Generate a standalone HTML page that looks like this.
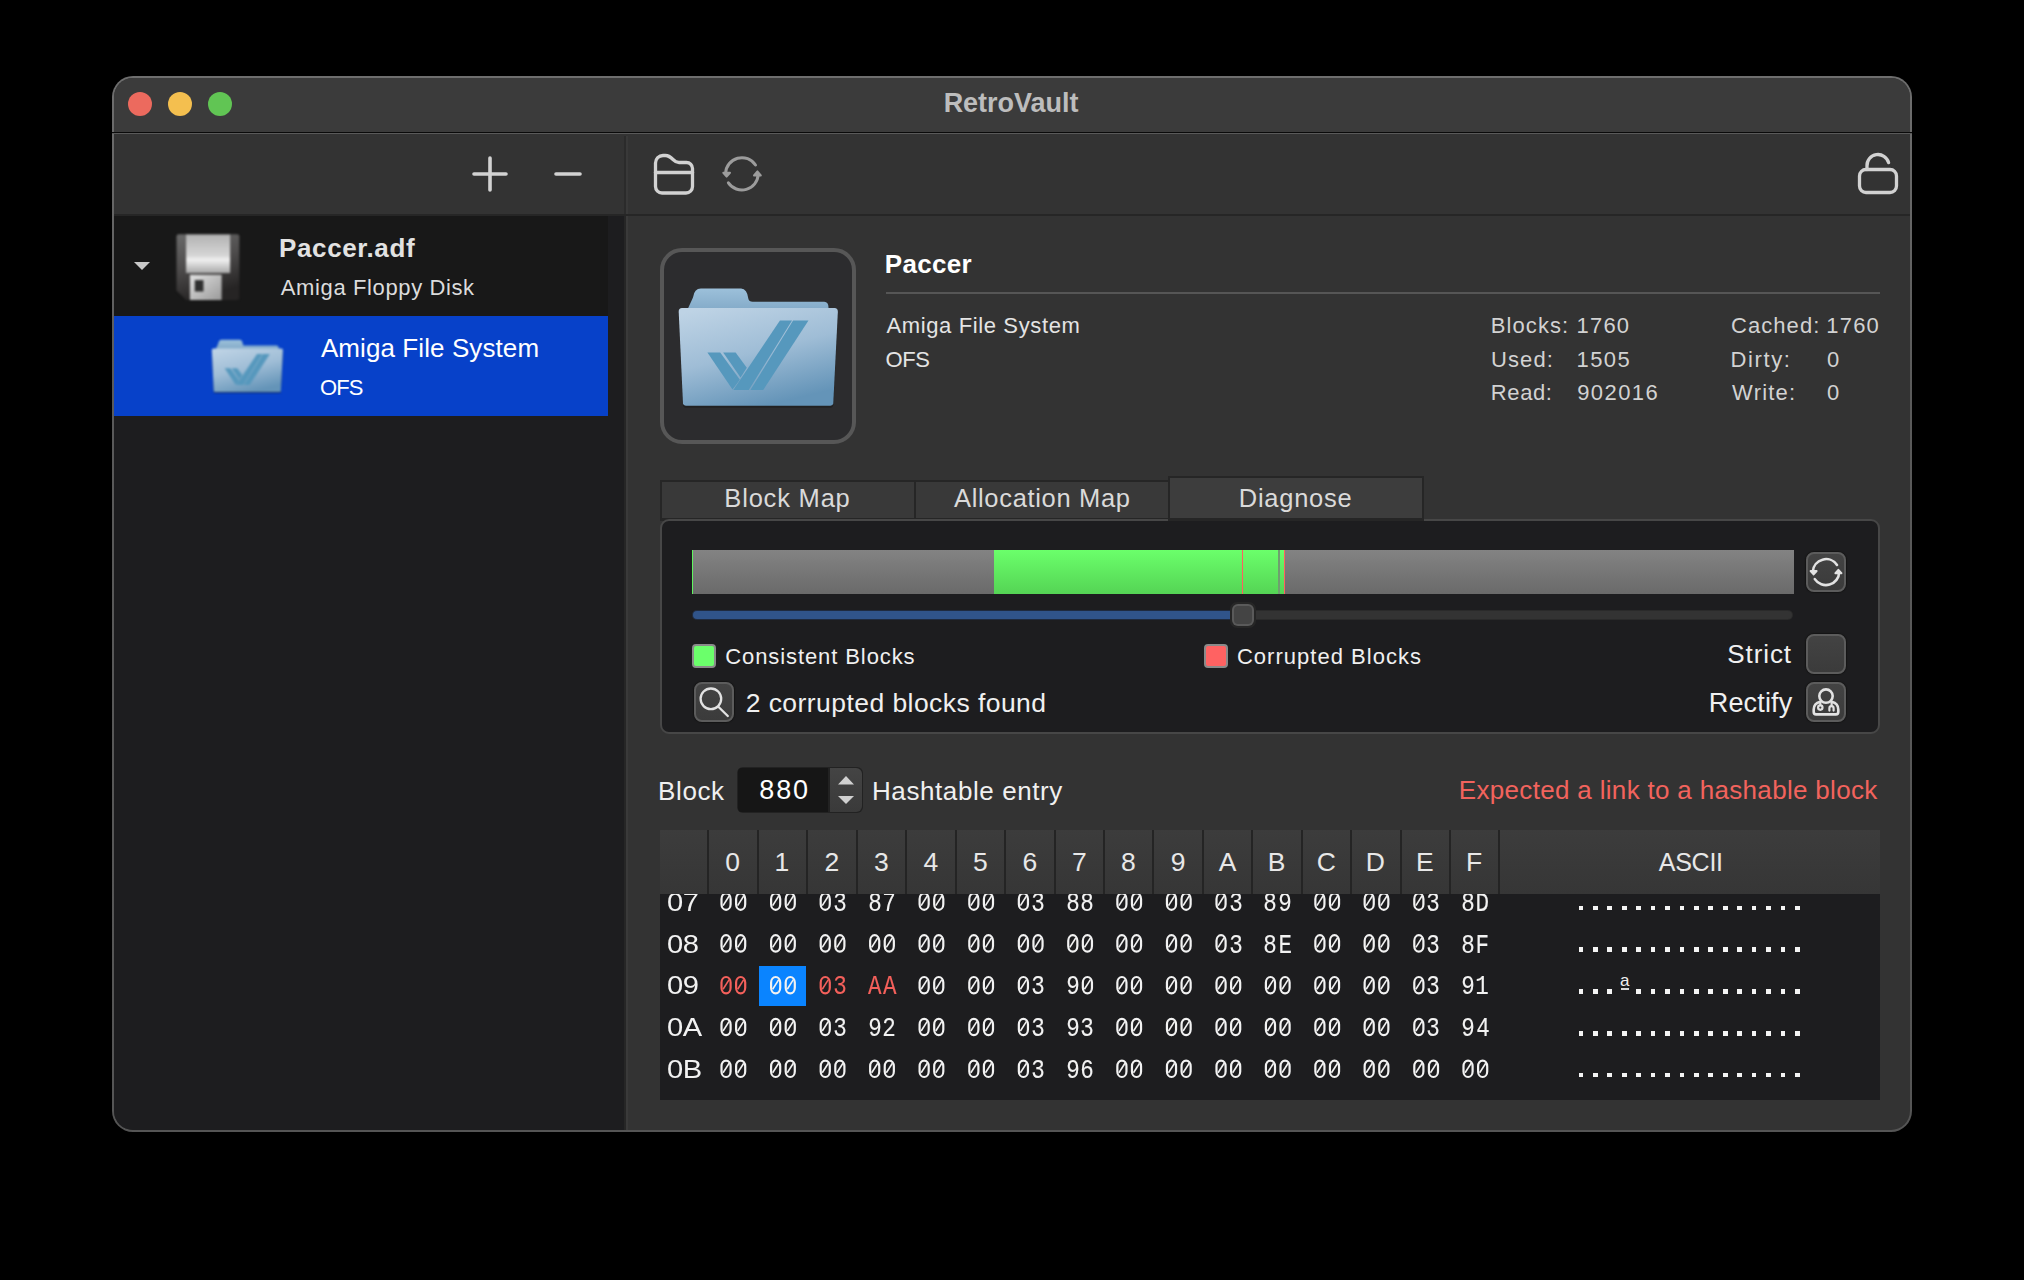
<!DOCTYPE html><html><head><meta charset="utf-8"><style>
html,body{margin:0;padding:0;background:#000;width:2024px;height:1280px;overflow:hidden}
.a{position:absolute;display:block}
.t{position:absolute;white-space:pre}
</style></head><body>
<div class="a" style="left:112px;top:76px;width:1800px;height:1056px;border-radius:21px;background:linear-gradient(#6e6e6e,#5a5a5a 30%,#555555);"></div>
<div class="a" style="left:114px;top:78px;width:1796px;height:1052px;border-radius:19px;background:#333333;overflow:hidden;" id="w">
<div class="a" style="left:-114px;top:-78px;width:2024px;height:1280px;">
<div class="a" style="left:0px;top:0px;width:2024px;height:132px;background:#3b3b3b"></div>
<div class="a" style="left:0px;top:132px;width:2024px;height:1px;background:#0a0a0a"></div>
<div class="a" style="left:0px;top:133px;width:2024px;height:1px;background:#5a5a5a"></div>
<div class="a" style="left:0px;top:134px;width:2024px;height:80px;background:#333333"></div>
<div class="a" style="left:0px;top:214px;width:2024px;height:2px;background:#262626"></div>
<div class="a" style="left:624px;top:136px;width:2px;height:78px;background:#2b2b2b"></div>
<div class="a" style="left:626px;top:136px;width:2px;height:78px;background:#393939"></div>
<div class="a" style="left:0px;top:216px;width:624px;height:1064px;background:#1d1d1f"></div>
<div class="a" style="left:624px;top:216px;width:2px;height:1064px;background:#262626"></div>
<div class="a" style="left:626px;top:216px;width:2px;height:1064px;background:#3a3a3a"></div>
<div class="a" style="left:0px;top:216px;width:608px;height:100px;background:#181818"></div>
<div class="a" style="left:0px;top:316px;width:608px;height:100px;background:#0741c9"></div>
</div></div>
<div class="a" style="left:112px;top:132px;width:1800px;height:1px;background:#0a0a0a"></div>
<div class="a" style="left:112px;top:133px;width:1800px;height:1px;background:#5a5a5a"></div>
<div class="a" style="left:128px;top:92px;width:24px;height:24px;border-radius:50%;background:#ec6a5e"></div>
<div class="a" style="left:168px;top:92px;width:24px;height:24px;border-radius:50%;background:#f4bf4f"></div>
<div class="a" style="left:208px;top:92px;width:24px;height:24px;border-radius:50%;background:#61c554"></div>
<div class="t" style="left:943.64px;top:90.00px;font:bold 27px/27px 'Liberation Sans';color:#bdbdbd;letter-spacing:-0.019px;">RetroVault</div>
<svg class="a" style="left:0px;top:0px;" width="2024" height="220" viewBox="0 0 2024 220">
<g fill="none" stroke="#d2d2d2" stroke-width="3.3" stroke-linecap="round" stroke-linejoin="round">
<path d="M474 174H506M490 158V190" stroke-width="3.6"/>
<path d="M556 174H580" stroke-width="3.6"/>
<path d="M655.5 186.5V163A7.5 7.5 0 0 1 663 155.5H665.5C669 155.5 671 157.5 673 159.5C675 161.5 676 162.5 679 162.5H686.5A6 6 0 0 1 692.5 168.5V186.5A6.5 6.5 0 0 1 686 193H662A6.5 6.5 0 0 1 655.5 186.5Z"/>
<path d="M655.5 172.5H692.5"/>
<rect x="1859.5" y="169.5" width="37" height="23" rx="6.5"/>
<path d="M1867 169.5V166A11 11 0 0 1 1888.6 162.6"/>
</g>
<g fill="none" stroke="#9c9c9c" stroke-width="3" stroke-linecap="round" stroke-linejoin="round">
<path d="M755.5 165A16.3 16.3 0 0 0 725.6 173.2"/>
<path d="M728.4 182.8A16.3 16.3 0 0 0 758.2 174.4"/>
<path d="M723.3 172.8H730L726.6 176.6Z" fill="#9c9c9c" stroke-width="2"/>
<path d="M754 175.4H760.8L757.4 171.4Z" fill="#9c9c9c" stroke-width="2"/>
</g>
</svg>
<svg class="a" style="left:130px;top:258px;" width="24" height="16" viewBox="0 0 24 16"><path d="M4 4H20L12 12Z" fill="#c8c8c8"/></svg>
<svg class="a" style="left:110px;top:210px;filter:blur(1.0px)" width="220" height="110" viewBox="0 0 2024 1012">
<defs>
<linearGradient id="fb" x1="0" y1="0" x2="0.3" y2="1"><stop offset="0" stop-color="#6a6a6a"/><stop offset="0.5" stop-color="#4e4c4c"/><stop offset="1" stop-color="#262424"/></linearGradient>
<linearGradient id="fl" x1="0" y1="0" x2="0" y2="1"><stop offset="0" stop-color="#b2b2b2"/><stop offset="0.55" stop-color="#d6d6d6"/><stop offset="0.65" stop-color="#f0f0f0"/><stop offset="0.8" stop-color="#d2d2d2"/><stop offset="1" stop-color="#a8a8a8"/></linearGradient>
<linearGradient id="fs" x1="0" y1="0" x2="1" y2="1"><stop offset="0" stop-color="#e0e0e0"/><stop offset="1" stop-color="#9a9a9a"/></linearGradient>
</defs>
<path d="M632 222H1170Q1190 222 1190 242V808Q1190 828 1170 828H700L612 740V242Q612 222 632 222Z" fill="url(#fb)"/>
<rect x="700" y="226" width="405" height="354" fill="url(#fl)"/>
<rect x="735" y="596" width="292" height="232" fill="url(#fs)"/>
<rect x="780" y="645" width="80" height="105" fill="#2e2e2e"/>
</svg>
<div class="t" style="left:279.11px;top:235.00px;font:bold 26px/26px 'Liberation Sans';color:#e2e2e2;letter-spacing:0.596px;">Paccer.adf</div>
<div class="t" style="left:280.80px;top:277.00px;font:normal 22px/22px 'Liberation Sans';color:#dcdcdc;letter-spacing:0.621px;">Amiga Floppy Disk</div>
<div class="t" style="left:320.90px;top:335.00px;font:normal 26px/26px 'Liberation Sans';color:#ffffff;letter-spacing:0.091px;">Amiga File System</div>
<div class="t" style="left:319.91px;top:377.00px;font:normal 22px/22px 'Liberation Sans';color:#ffffff;letter-spacing:-0.815px;">OFS</div>
<div class="a" style="left:660px;top:248px;width:196px;height:196px;border:4px solid #575757;border-radius:22px;background:#2c2c2e;box-sizing:border-box"></div>
<svg class="a" style="left:650px;top:240px;" width="220" height="210" viewBox="0 0 1341 1280">
<defs>
<linearGradient id="ffa" x1="0.15" y1="0" x2="0.55" y2="1"><stop offset="0" stop-color="#bed3e5"/><stop offset="0.5" stop-color="#9fbdd6"/><stop offset="1" stop-color="#6494b8"/></linearGradient>
<linearGradient id="fta" x1="0" y1="0" x2="0" y2="1"><stop offset="0" stop-color="#9cc0da"/><stop offset="1" stop-color="#83aac8"/></linearGradient>
</defs>
<path d="M230 420L262 350Q270 296 310 296H555Q592 296 600 360Q604 376 625 376H1062Q1088 378 1088 410V430H230Z" fill="url(#fta)"/>
<path d="M195 420H1125Q1146 420 1145 445L1117 995Q1116 1012 1100 1012H218Q202 1012 201 995L175 445Q174 420 195 420Z" fill="#1b1b1b" transform="translate(0,10)" opacity="0.6"/>
<path d="M195 415H1125Q1146 415 1145 440L1117 995Q1116 1010 1100 1010H218Q202 1010 201 995L175 440Q174 415 195 415Z" fill="url(#ffa)"/>
<g fill="#5698bd">
<path d="M792 490H866L602 915H508Z"/>
<path d="M872 490H966L690 915H612Z"/>
<path d="M350 685H428L548 852L503 912Z"/>
<path d="M446 685H522L590 778L552 838Z"/>
</g>
</svg>
<svg class="a" style="left:199.4px;top:318.4px;filter:blur(0.95px)" width="98.3" height="93.9" viewBox="0 0 1341 1280">
<defs>
<linearGradient id="ffb" x1="0.15" y1="0" x2="0.55" y2="1"><stop offset="0" stop-color="#bed3e5"/><stop offset="0.5" stop-color="#9fbdd6"/><stop offset="1" stop-color="#6494b8"/></linearGradient>
<linearGradient id="ftb" x1="0" y1="0" x2="0" y2="1"><stop offset="0" stop-color="#9cc0da"/><stop offset="1" stop-color="#83aac8"/></linearGradient>
</defs>
<path d="M230 420L262 350Q270 296 310 296H555Q592 296 600 360Q604 376 625 376H1062Q1088 378 1088 410V430H230Z" fill="url(#ftb)"/>
<path d="M195 420H1125Q1146 420 1145 445L1117 995Q1116 1012 1100 1012H218Q202 1012 201 995L175 445Q174 420 195 420Z" fill="#1b1b1b" transform="translate(0,10)" opacity="0.6"/>
<path d="M195 415H1125Q1146 415 1145 440L1117 995Q1116 1010 1100 1010H218Q202 1010 201 995L175 440Q174 415 195 415Z" fill="url(#ffb)"/>
<g fill="#5698bd">
<path d="M792 490H866L602 915H508Z"/>
<path d="M872 490H966L690 915H612Z"/>
<path d="M350 685H428L548 852L503 912Z"/>
<path d="M446 685H522L590 778L552 838Z"/>
</g>
</svg>
<div class="t" style="left:884.81px;top:251.00px;font:bold 26px/26px 'Liberation Sans';color:#ffffff;letter-spacing:0.280px;">Paccer</div>
<div class="a" style="left:886px;top:292px;width:994px;height:2px;background:#565656"></div>
<div class="t" style="left:886.50px;top:315.00px;font:normal 22px/22px 'Liberation Sans';color:#e4e4e4;letter-spacing:0.622px;">Amiga File System</div>
<div class="t" style="left:885.51px;top:349.00px;font:normal 22px/22px 'Liberation Sans';color:#e4e4e4;letter-spacing:-0.365px;">OFS</div>
<div class="t" style="left:1490.84px;top:315.00px;font:normal 22px/22px 'Liberation Sans';color:#d2d2d2;letter-spacing:1.067px;">Blocks:</div>
<div class="t" style="left:1490.95px;top:349.00px;font:normal 22px/22px 'Liberation Sans';color:#d2d2d2;letter-spacing:1.127px;">Used:</div>
<div class="t" style="left:1490.84px;top:382.00px;font:normal 22px/22px 'Liberation Sans';color:#d2d2d2;letter-spacing:0.602px;">Read:</div>
<div class="t" style="left:1576.55px;top:315.00px;font:normal 22px/22px 'Liberation Sans';color:#d2d2d2;letter-spacing:1.190px;">1760</div>
<div class="t" style="left:1576.55px;top:349.00px;font:normal 22px/22px 'Liberation Sans';color:#d2d2d2;letter-spacing:1.427px;">1505</div>
<div class="t" style="left:1577.21px;top:382.00px;font:normal 22px/22px 'Liberation Sans';color:#d2d2d2;letter-spacing:1.420px;">902016</div>
<div class="t" style="left:1731.10px;top:315.00px;font:normal 22px/22px 'Liberation Sans';color:#d2d2d2;letter-spacing:1.040px;">Cached:</div>
<div class="t" style="left:1730.44px;top:349.00px;font:normal 22px/22px 'Liberation Sans';color:#d2d2d2;letter-spacing:1.636px;">Dirty:</div>
<div class="t" style="left:1732.09px;top:382.00px;font:normal 22px/22px 'Liberation Sans';color:#d2d2d2;letter-spacing:1.182px;">Write:</div>
<div class="t" style="left:1826.35px;top:315.00px;font:normal 22px/22px 'Liberation Sans';color:#d2d2d2;letter-spacing:1.157px;">1760</div>
<div class="t" style="left:1827.12px;top:349.00px;font:normal 22px/22px 'Liberation Sans';color:#d2d2d2;letter-spacing:0.000px;">0</div>
<div class="t" style="left:1827.12px;top:382.00px;font:normal 22px/22px 'Liberation Sans';color:#d2d2d2;letter-spacing:0.000px;">0</div>
<div class="a" style="left:660px;top:480px;width:256px;height:41px;background:#262626"></div>
<div class="a" style="left:662px;top:482px;width:252px;height:36px;background:#393939"></div>
<div class="a" style="left:914px;top:480px;width:256px;height:41px;background:#262626"></div>
<div class="a" style="left:916px;top:482px;width:252px;height:36px;background:#393939"></div>
<div class="a" style="left:660px;top:519px;width:1220px;height:215px;border:2px solid #474747;border-radius:9px;background:#1d1d1f;box-sizing:border-box"></div>
<div class="a" style="left:1168px;top:476px;width:256px;height:45px;background:#262626"></div>
<div class="a" style="left:1170px;top:478px;width:252px;height:40px;background:#3d3d3d"></div>
<div class="t" style="left:724.36px;top:486.00px;font:normal 25.5px/25.5px 'Liberation Sans';color:#dadada;letter-spacing:0.800px;">Block Map</div>
<div class="t" style="left:954.00px;top:486.00px;font:normal 25.5px/25.5px 'Liberation Sans';color:#dadada;letter-spacing:0.672px;">Allocation Map</div>
<div class="t" style="left:1238.76px;top:486.00px;font:normal 25.5px/25.5px 'Liberation Sans';color:#dadada;letter-spacing:0.736px;">Diagnose</div>
<div class="a" style="left:692px;top:550px;width:1102px;height:44px;background:linear-gradient(#838383,#6a6a6a)"></div>
<div class="a" style="left:692px;top:550px;width:1px;height:44px;background:#5ff55f"></div>
<div class="a" style="left:994px;top:550px;width:291px;height:44px;background:linear-gradient(#6bff6b,#55d455)"></div>
<div class="a" style="left:1242px;top:550px;width:1px;height:44px;background:#ff5f5f"></div>
<div class="a" style="left:1278px;top:550px;width:2px;height:44px;background:#6f9f6f"></div>
<div class="a" style="left:1284px;top:550px;width:1px;height:44px;background:#ff6060"></div>
<div class="a" style="left:692px;top:610px;width:1101px;height:10px;background:#2a2a2a;border-radius:5px"></div>
<div class="a" style="left:693px;top:611px;width:1099px;height:8px;background:#333333;border-radius:4px"></div>
<div class="a" style="left:692px;top:610px;width:548px;height:10px;background:#1f2b40;border-radius:5px 0 0 5px"></div>
<div class="a" style="left:693px;top:611px;width:547px;height:8px;background:#30548a;border-radius:4px 0 0 4px"></div>
<div class="a" style="left:1230px;top:602px;width:26px;height:26px;background:#262626;border-radius:7px"></div>
<div class="a" style="left:1232px;top:604px;width:22px;height:22px;background:#5a5a5a;border-radius:6px"></div>
<div class="a" style="left:1234px;top:606px;width:18px;height:18px;background:#444444;border-radius:4px"></div>
<div class="a" style="left:692px;top:644px;width:24px;height:24px;background:#6bff6b;border:2px solid #8a8a8a;border-radius:4px;box-sizing:border-box"></div>
<div class="t" style="left:725.30px;top:646.00px;font:normal 22px/22px 'Liberation Sans';color:#f0f0f0;letter-spacing:0.904px;">Consistent Blocks</div>
<div class="a" style="left:1204px;top:644px;width:24px;height:24px;background:#ff6262;border:2px solid #8a8a8a;border-radius:4px;box-sizing:border-box"></div>
<div class="t" style="left:1236.90px;top:646.00px;font:normal 22px/22px 'Liberation Sans';color:#f0f0f0;letter-spacing:1.029px;">Corrupted Blocks</div>
<div class="t" style="left:1727.33px;top:641.00px;font:normal 26px/26px 'Liberation Sans';color:#f0f0f0;letter-spacing:0.890px;">Strict</div>
<div class="t" style="left:1708.74px;top:690.00px;font:normal 27px/27px 'Liberation Sans';color:#f0f0f0;letter-spacing:0.162px;">Rectify</div>
<div class="t" style="left:745.67px;top:690.00px;font:normal 26.5px/26.5px 'Liberation Sans';color:#f0f0f0;letter-spacing:0.442px;">2 corrupted blocks found</div>
<div class="a" style="left:1806px;top:552px;width:40px;height:40px;background:linear-gradient(#434343,#3b3b3b);border:2px solid #5c5c5c;border-radius:8px;box-sizing:border-box;box-shadow:0 0 1px 1px #151515"></div>
<div class="a" style="left:1806px;top:634px;width:40px;height:40px;background:linear-gradient(#434343,#3b3b3b);border:2px solid #5c5c5c;border-radius:8px;box-sizing:border-box;box-shadow:0 0 1px 1px #151515"></div>
<div class="a" style="left:1806px;top:682px;width:40px;height:40px;background:linear-gradient(#434343,#3b3b3b);border:2px solid #5c5c5c;border-radius:8px;box-sizing:border-box;box-shadow:0 0 1px 1px #151515"></div>
<div class="a" style="left:694px;top:682px;width:40px;height:40px;background:linear-gradient(#434343,#3b3b3b);border:2px solid #5c5c5c;border-radius:8px;box-sizing:border-box;box-shadow:0 0 1px 1px #151515"></div>
<svg class="a" style="left:0px;top:540px;" width="2024" height="200" viewBox="0 540 2024 200">
<g fill="none" stroke="#e2e2e2" stroke-width="2.6" stroke-linecap="round">
<circle cx="710.9" cy="698.8" r="10.3" stroke-width="2.3"/>
<path d="M718.6 707L727.8 716" stroke-width="2.3"/>
<path d="M1837 564.9A13.3 13.3 0 0 0 1812.8 571.5"/>
<path d="M1814.8 579.1A13.3 13.3 0 0 0 1839.2 572"/>
<circle cx="1826" cy="696.1" r="6.7"/>
<path d="M1820.2 701.8C1816.3 702.8 1813.7 705.8 1813.7 709.6V712A2.4 2.4 0 0 0 1816.1 714.4H1835.9A2.4 2.4 0 0 0 1838.3 712V709.6C1838.3 705.8 1835.7 702.8 1831.8 701.8"/>
<path d="M1820.3 702.5V705" stroke-width="2.2"/>
<circle cx="1820.3" cy="707.6" r="2.2" stroke-width="2.2"/>
<path d="M1831.6 702.5V706" stroke-width="2.2"/>
<path d="M1829.4 710.6V708.2A2.1 2.1 0 0 1 1833.6 708.2V710.6" stroke-width="2.2"/>
</g>
<g fill="#e2e2e2">
<path d="M1810.6 571H1816.6L1813.6 574.4Z" stroke="#e2e2e2" stroke-width="2" stroke-linejoin="round"/>
<path d="M1835.4 573.2H1841.4L1838.4 569.8Z" stroke="#e2e2e2" stroke-width="2" stroke-linejoin="round"/>
</g>
</svg>
<div class="t" style="left:658.12px;top:778.00px;font:normal 26px/26px 'Liberation Sans';color:#f0f0f0;letter-spacing:0.603px;">Block</div>
<div class="a" style="left:737px;top:767px;width:126px;height:46px;background:#222222;border-radius:6px"></div>
<div class="a" style="left:738px;top:768px;width:90px;height:44px;background:#161616;border-radius:4px 0 0 4px"></div>
<div class="a" style="left:830px;top:768px;width:32px;height:44px;background:linear-gradient(#444,#3a3a3a);border-radius:0 6px 6px 0"></div>
<svg class="a" style="left:830px;top:768px;" width="32" height="44" viewBox="0 0 32 44"><path d="M8 16.5H24L16 8Z M8 28H24L16 36Z" fill="#d0d0d0"/></svg>
<div class="t" style="left:759.18px;top:777.00px;font:normal 27px/27px 'Liberation Sans';color:#ffffff;letter-spacing:1.953px;">880</div>
<div class="t" style="left:872.02px;top:778.00px;font:normal 26px/26px 'Liberation Sans';color:#f0f0f0;letter-spacing:0.582px;">Hashtable entry</div>
<div class="t" style="left:1458.82px;top:777.00px;font:normal 26px/26px 'Liberation Sans';color:#f2635d;letter-spacing:0.321px;">Expected a link to a hashable block</div>
<div class="a" style="left:660px;top:830px;width:1220px;height:270px;background:#1d1d1f"></div>
<div class="a" style="left:660px;top:830px;width:1220px;height:64px;background:linear-gradient(#3c3c3c,#363636)"></div>
<div class="a" style="left:707px;top:830px;width:2px;height:64px;background:#242424"></div>
<div class="a" style="left:757px;top:830px;width:2px;height:64px;background:#242424"></div>
<div class="a" style="left:806px;top:830px;width:2px;height:64px;background:#242424"></div>
<div class="a" style="left:856px;top:830px;width:2px;height:64px;background:#242424"></div>
<div class="a" style="left:905px;top:830px;width:2px;height:64px;background:#242424"></div>
<div class="a" style="left:955px;top:830px;width:2px;height:64px;background:#242424"></div>
<div class="a" style="left:1004px;top:830px;width:2px;height:64px;background:#242424"></div>
<div class="a" style="left:1054px;top:830px;width:2px;height:64px;background:#242424"></div>
<div class="a" style="left:1103px;top:830px;width:2px;height:64px;background:#242424"></div>
<div class="a" style="left:1152px;top:830px;width:2px;height:64px;background:#242424"></div>
<div class="a" style="left:1202px;top:830px;width:2px;height:64px;background:#242424"></div>
<div class="a" style="left:1251px;top:830px;width:2px;height:64px;background:#242424"></div>
<div class="a" style="left:1301px;top:830px;width:2px;height:64px;background:#242424"></div>
<div class="a" style="left:1350px;top:830px;width:2px;height:64px;background:#242424"></div>
<div class="a" style="left:1400px;top:830px;width:2px;height:64px;background:#242424"></div>
<div class="a" style="left:1449px;top:830px;width:2px;height:64px;background:#242424"></div>
<div class="a" style="left:1498px;top:830px;width:2px;height:64px;background:#242424"></div>
<div class="t" style="left:725.23px;top:849.00px;font:normal 26.5px/26.5px 'Liberation Sans';color:#e8e8e8;letter-spacing:0.000px;">0</div>
<div class="t" style="left:774.50px;top:849.00px;font:normal 26.5px/26.5px 'Liberation Sans';color:#e8e8e8;letter-spacing:0.000px;">1</div>
<div class="t" style="left:824.50px;top:849.00px;font:normal 26.5px/26.5px 'Liberation Sans';color:#e8e8e8;letter-spacing:0.000px;">2</div>
<div class="t" style="left:873.95px;top:849.00px;font:normal 26.5px/26.5px 'Liberation Sans';color:#e8e8e8;letter-spacing:0.000px;">3</div>
<div class="t" style="left:923.53px;top:849.00px;font:normal 26.5px/26.5px 'Liberation Sans';color:#e8e8e8;letter-spacing:0.000px;">4</div>
<div class="t" style="left:973.10px;top:849.00px;font:normal 26.5px/26.5px 'Liberation Sans';color:#e8e8e8;letter-spacing:0.000px;">5</div>
<div class="t" style="left:1022.51px;top:849.00px;font:normal 26.5px/26.5px 'Liberation Sans';color:#e8e8e8;letter-spacing:0.000px;">6</div>
<div class="t" style="left:1072.05px;top:849.00px;font:normal 26.5px/26.5px 'Liberation Sans';color:#e8e8e8;letter-spacing:0.000px;">7</div>
<div class="t" style="left:1121.08px;top:849.00px;font:normal 26.5px/26.5px 'Liberation Sans';color:#e8e8e8;letter-spacing:0.000px;">8</div>
<div class="t" style="left:1170.75px;top:849.00px;font:normal 26.5px/26.5px 'Liberation Sans';color:#e8e8e8;letter-spacing:0.000px;">9</div>
<div class="t" style="left:1218.84px;top:849.00px;font:normal 26.5px/26.5px 'Liberation Sans';color:#e8e8e8;letter-spacing:0.000px;">A</div>
<div class="t" style="left:1267.84px;top:849.00px;font:normal 26.5px/26.5px 'Liberation Sans';color:#e8e8e8;letter-spacing:0.000px;">B</div>
<div class="t" style="left:1316.76px;top:849.00px;font:normal 26.5px/26.5px 'Liberation Sans';color:#e8e8e8;letter-spacing:0.000px;">C</div>
<div class="t" style="left:1365.80px;top:849.00px;font:normal 26.5px/26.5px 'Liberation Sans';color:#e8e8e8;letter-spacing:0.000px;">D</div>
<div class="t" style="left:1416.11px;top:849.00px;font:normal 26.5px/26.5px 'Liberation Sans';color:#e8e8e8;letter-spacing:0.000px;">E</div>
<div class="t" style="left:1466.04px;top:849.00px;font:normal 26.5px/26.5px 'Liberation Sans';color:#e8e8e8;letter-spacing:0.000px;">F</div>
<div class="t" style="left:1658.80px;top:850.00px;font:normal 25px/25px 'Liberation Sans';color:#e8e8e8;letter-spacing:-0.275px;">ASCII</div>
<div class="a" style="left:660px;top:894px;width:1220px;height:206px;overflow:hidden">
<div class="a" style="left:-660px;top:-894px;width:2024px;height:1280px">
<div class="a" style="left:759px;top:966px;width:47px;height:40px;background:#0a84ff"></div>
<div class="t" style="left:667.34px;top:889.00px;font:normal 26.5px/26.5px 'Liberation Sans';color:#f2f2f2;letter-spacing:-0.300px;transform:scaleX(1.1);transform-origin:1.06px 0;">07</div>
<div class="t" style="left:832.76px;top:890.00px;font:normal 27.5px/27.5px 'Liberation Mono';color:#f2f2f2;letter-spacing:0.000px;transform:scaleX(0.82);transform-origin:1.79px 0;-webkit-text-stroke:0.1px #f2f2f2;">3</div>
<div class="t" style="left:867.61px;top:890.00px;font:normal 27.5px/27.5px 'Liberation Mono';color:#f2f2f2;letter-spacing:0.000px;transform:scaleX(0.82);transform-origin:1.79px 0;-webkit-text-stroke:0.1px #f2f2f2;">8</div>
<div class="t" style="left:882.22px;top:890.00px;font:normal 27.5px/27.5px 'Liberation Mono';color:#f2f2f2;letter-spacing:0.000px;transform:scaleX(0.82);transform-origin:2.06px 0;-webkit-text-stroke:0.1px #f2f2f2;">7</div>
<div class="t" style="left:1030.91px;top:890.00px;font:normal 27.5px/27.5px 'Liberation Mono';color:#f2f2f2;letter-spacing:0.000px;transform:scaleX(0.82);transform-origin:1.79px 0;-webkit-text-stroke:0.1px #f2f2f2;">3</div>
<div class="t" style="left:1065.71px;top:890.00px;font:normal 27.5px/27.5px 'Liberation Mono';color:#f2f2f2;letter-spacing:0.000px;transform:scaleX(0.82);transform-origin:1.79px 0;-webkit-text-stroke:0.1px #f2f2f2;">8</div>
<div class="t" style="left:1080.31px;top:890.00px;font:normal 27.5px/27.5px 'Liberation Mono';color:#f2f2f2;letter-spacing:0.000px;transform:scaleX(0.82);transform-origin:1.79px 0;-webkit-text-stroke:0.1px #f2f2f2;">8</div>
<div class="t" style="left:1228.56px;top:890.00px;font:normal 27.5px/27.5px 'Liberation Mono';color:#f2f2f2;letter-spacing:0.000px;transform:scaleX(0.82);transform-origin:1.79px 0;-webkit-text-stroke:0.1px #f2f2f2;">3</div>
<div class="t" style="left:1263.36px;top:890.00px;font:normal 27.5px/27.5px 'Liberation Mono';color:#f2f2f2;letter-spacing:0.000px;transform:scaleX(0.82);transform-origin:1.79px 0;-webkit-text-stroke:0.1px #f2f2f2;">8</div>
<div class="t" style="left:1277.94px;top:890.00px;font:normal 27.5px/27.5px 'Liberation Mono';color:#f2f2f2;letter-spacing:0.000px;transform:scaleX(0.82);transform-origin:1.92px 0;-webkit-text-stroke:0.1px #f2f2f2;">9</div>
<div class="t" style="left:1426.36px;top:890.00px;font:normal 27.5px/27.5px 'Liberation Mono';color:#f2f2f2;letter-spacing:0.000px;transform:scaleX(0.82);transform-origin:1.79px 0;-webkit-text-stroke:0.1px #f2f2f2;">3</div>
<div class="t" style="left:1460.96px;top:890.00px;font:normal 27.5px/27.5px 'Liberation Mono';color:#f2f2f2;letter-spacing:0.000px;transform:scaleX(0.82);transform-origin:1.79px 0;-webkit-text-stroke:0.1px #f2f2f2;">8</div>
<div class="t" style="left:1475.15px;top:890.00px;font:normal 27.5px/27.5px 'Liberation Mono';color:#f2f2f2;letter-spacing:0.000px;transform:scaleX(0.82);transform-origin:2.20px 0;-webkit-text-stroke:0.1px #f2f2f2;">D</div>
<div class="a" style="left:1578.60px;top:905.50px;width:4.7px;height:4.7px;background:#f4f4f4"></div>
<div class="a" style="left:1593.03px;top:905.50px;width:4.7px;height:4.7px;background:#f4f4f4"></div>
<div class="a" style="left:1607.46px;top:905.50px;width:4.7px;height:4.7px;background:#f4f4f4"></div>
<div class="a" style="left:1621.89px;top:905.50px;width:4.7px;height:4.7px;background:#f4f4f4"></div>
<div class="a" style="left:1636.32px;top:905.50px;width:4.7px;height:4.7px;background:#f4f4f4"></div>
<div class="a" style="left:1650.75px;top:905.50px;width:4.7px;height:4.7px;background:#f4f4f4"></div>
<div class="a" style="left:1665.18px;top:905.50px;width:4.7px;height:4.7px;background:#f4f4f4"></div>
<div class="a" style="left:1679.61px;top:905.50px;width:4.7px;height:4.7px;background:#f4f4f4"></div>
<div class="a" style="left:1694.04px;top:905.50px;width:4.7px;height:4.7px;background:#f4f4f4"></div>
<div class="a" style="left:1708.47px;top:905.50px;width:4.7px;height:4.7px;background:#f4f4f4"></div>
<div class="a" style="left:1722.90px;top:905.50px;width:4.7px;height:4.7px;background:#f4f4f4"></div>
<div class="a" style="left:1737.33px;top:905.50px;width:4.7px;height:4.7px;background:#f4f4f4"></div>
<div class="a" style="left:1751.76px;top:905.50px;width:4.7px;height:4.7px;background:#f4f4f4"></div>
<div class="a" style="left:1766.19px;top:905.50px;width:4.7px;height:4.7px;background:#f4f4f4"></div>
<div class="a" style="left:1780.62px;top:905.50px;width:4.7px;height:4.7px;background:#f4f4f4"></div>
<div class="a" style="left:1795.05px;top:905.50px;width:4.7px;height:4.7px;background:#f4f4f4"></div>
<div class="t" style="left:667.34px;top:931.00px;font:normal 26.5px/26.5px 'Liberation Sans';color:#f2f2f2;letter-spacing:-0.300px;transform:scaleX(1.1);transform-origin:1.06px 0;">08</div>
<div class="t" style="left:1228.56px;top:932.00px;font:normal 27.5px/27.5px 'Liberation Mono';color:#f2f2f2;letter-spacing:0.000px;transform:scaleX(0.82);transform-origin:1.79px 0;-webkit-text-stroke:0.1px #f2f2f2;">3</div>
<div class="t" style="left:1263.36px;top:932.00px;font:normal 27.5px/27.5px 'Liberation Mono';color:#f2f2f2;letter-spacing:0.000px;transform:scaleX(0.82);transform-origin:1.79px 0;-webkit-text-stroke:0.1px #f2f2f2;">8</div>
<div class="t" style="left:1277.55px;top:932.00px;font:normal 27.5px/27.5px 'Liberation Mono';color:#f2f2f2;letter-spacing:0.000px;transform:scaleX(0.82);transform-origin:2.20px 0;-webkit-text-stroke:0.1px #f2f2f2;">E</div>
<div class="t" style="left:1426.36px;top:932.00px;font:normal 27.5px/27.5px 'Liberation Mono';color:#f2f2f2;letter-spacing:0.000px;transform:scaleX(0.82);transform-origin:1.79px 0;-webkit-text-stroke:0.1px #f2f2f2;">3</div>
<div class="t" style="left:1460.96px;top:932.00px;font:normal 27.5px/27.5px 'Liberation Mono';color:#f2f2f2;letter-spacing:0.000px;transform:scaleX(0.82);transform-origin:1.79px 0;-webkit-text-stroke:0.1px #f2f2f2;">8</div>
<div class="t" style="left:1475.13px;top:932.00px;font:normal 27.5px/27.5px 'Liberation Mono';color:#f2f2f2;letter-spacing:0.000px;transform:scaleX(0.82);transform-origin:2.61px 0;-webkit-text-stroke:0.1px #f2f2f2;">F</div>
<div class="a" style="left:1578.60px;top:947.30px;width:4.7px;height:4.7px;background:#f4f4f4"></div>
<div class="a" style="left:1593.03px;top:947.30px;width:4.7px;height:4.7px;background:#f4f4f4"></div>
<div class="a" style="left:1607.46px;top:947.30px;width:4.7px;height:4.7px;background:#f4f4f4"></div>
<div class="a" style="left:1621.89px;top:947.30px;width:4.7px;height:4.7px;background:#f4f4f4"></div>
<div class="a" style="left:1636.32px;top:947.30px;width:4.7px;height:4.7px;background:#f4f4f4"></div>
<div class="a" style="left:1650.75px;top:947.30px;width:4.7px;height:4.7px;background:#f4f4f4"></div>
<div class="a" style="left:1665.18px;top:947.30px;width:4.7px;height:4.7px;background:#f4f4f4"></div>
<div class="a" style="left:1679.61px;top:947.30px;width:4.7px;height:4.7px;background:#f4f4f4"></div>
<div class="a" style="left:1694.04px;top:947.30px;width:4.7px;height:4.7px;background:#f4f4f4"></div>
<div class="a" style="left:1708.47px;top:947.30px;width:4.7px;height:4.7px;background:#f4f4f4"></div>
<div class="a" style="left:1722.90px;top:947.30px;width:4.7px;height:4.7px;background:#f4f4f4"></div>
<div class="a" style="left:1737.33px;top:947.30px;width:4.7px;height:4.7px;background:#f4f4f4"></div>
<div class="a" style="left:1751.76px;top:947.30px;width:4.7px;height:4.7px;background:#f4f4f4"></div>
<div class="a" style="left:1766.19px;top:947.30px;width:4.7px;height:4.7px;background:#f4f4f4"></div>
<div class="a" style="left:1780.62px;top:947.30px;width:4.7px;height:4.7px;background:#f4f4f4"></div>
<div class="a" style="left:1795.05px;top:947.30px;width:4.7px;height:4.7px;background:#f4f4f4"></div>
<div class="t" style="left:667.34px;top:972.00px;font:normal 26.5px/26.5px 'Liberation Sans';color:#f2f2f2;letter-spacing:-0.300px;transform:scaleX(1.1);transform-origin:1.06px 0;">09</div>
<div class="t" style="left:832.76px;top:973.00px;font:normal 27.5px/27.5px 'Liberation Mono';color:#f4605b;letter-spacing:0.000px;transform:scaleX(0.82);transform-origin:1.79px 0;-webkit-text-stroke:0.1px #f4605b;">3</div>
<div class="t" style="left:867.94px;top:973.00px;font:normal 27.5px/27.5px 'Liberation Mono';color:#f4605b;letter-spacing:0.000px;transform:scaleX(0.82);transform-origin:0.00px 0;-webkit-text-stroke:0.1px #f4605b;">A</div>
<div class="t" style="left:882.53px;top:973.00px;font:normal 27.5px/27.5px 'Liberation Mono';color:#f4605b;letter-spacing:0.000px;transform:scaleX(0.82);transform-origin:0.00px 0;-webkit-text-stroke:0.1px #f4605b;">A</div>
<div class="t" style="left:1030.91px;top:973.00px;font:normal 27.5px/27.5px 'Liberation Mono';color:#f2f2f2;letter-spacing:0.000px;transform:scaleX(0.82);transform-origin:1.79px 0;-webkit-text-stroke:0.1px #f2f2f2;">3</div>
<div class="t" style="left:1065.69px;top:973.00px;font:normal 27.5px/27.5px 'Liberation Mono';color:#f2f2f2;letter-spacing:0.000px;transform:scaleX(0.82);transform-origin:1.92px 0;-webkit-text-stroke:0.1px #f2f2f2;">9</div>
<div class="t" style="left:1426.36px;top:973.00px;font:normal 27.5px/27.5px 'Liberation Mono';color:#f2f2f2;letter-spacing:0.000px;transform:scaleX(0.82);transform-origin:1.79px 0;-webkit-text-stroke:0.1px #f2f2f2;">3</div>
<div class="t" style="left:1460.94px;top:973.00px;font:normal 27.5px/27.5px 'Liberation Mono';color:#f2f2f2;letter-spacing:0.000px;transform:scaleX(0.82);transform-origin:1.92px 0;-webkit-text-stroke:0.1px #f2f2f2;">9</div>
<div class="t" style="left:1475.31px;top:973.00px;font:normal 27.5px/27.5px 'Liberation Mono';color:#f2f2f2;letter-spacing:0.000px;transform:scaleX(0.82);transform-origin:1.92px 0;-webkit-text-stroke:0.1px #f2f2f2;">1</div>
<div class="a" style="left:1578.60px;top:989.10px;width:4.7px;height:4.7px;background:#f4f4f4"></div>
<div class="a" style="left:1593.03px;top:989.10px;width:4.7px;height:4.7px;background:#f4f4f4"></div>
<div class="a" style="left:1607.46px;top:989.10px;width:4.7px;height:4.7px;background:#f4f4f4"></div>
<div class="t" style="left:1620.12px;top:972.00px;font:normal 17px/17px 'Liberation Sans';color:#f0f0f0;letter-spacing:0.000px;">a</div>
<div class="a" style="left:1620.8px;top:987.60px;width:8.6px;height:2px;background:#d8d8d8"></div>
<div class="a" style="left:1636.32px;top:989.10px;width:4.7px;height:4.7px;background:#f4f4f4"></div>
<div class="a" style="left:1650.75px;top:989.10px;width:4.7px;height:4.7px;background:#f4f4f4"></div>
<div class="a" style="left:1665.18px;top:989.10px;width:4.7px;height:4.7px;background:#f4f4f4"></div>
<div class="a" style="left:1679.61px;top:989.10px;width:4.7px;height:4.7px;background:#f4f4f4"></div>
<div class="a" style="left:1694.04px;top:989.10px;width:4.7px;height:4.7px;background:#f4f4f4"></div>
<div class="a" style="left:1708.47px;top:989.10px;width:4.7px;height:4.7px;background:#f4f4f4"></div>
<div class="a" style="left:1722.90px;top:989.10px;width:4.7px;height:4.7px;background:#f4f4f4"></div>
<div class="a" style="left:1737.33px;top:989.10px;width:4.7px;height:4.7px;background:#f4f4f4"></div>
<div class="a" style="left:1751.76px;top:989.10px;width:4.7px;height:4.7px;background:#f4f4f4"></div>
<div class="a" style="left:1766.19px;top:989.10px;width:4.7px;height:4.7px;background:#f4f4f4"></div>
<div class="a" style="left:1780.62px;top:989.10px;width:4.7px;height:4.7px;background:#f4f4f4"></div>
<div class="a" style="left:1795.05px;top:989.10px;width:4.7px;height:4.7px;background:#f4f4f4"></div>
<div class="t" style="left:667.34px;top:1014.00px;font:normal 26.5px/26.5px 'Liberation Sans';color:#f2f2f2;letter-spacing:-0.300px;transform:scaleX(1.1);transform-origin:1.06px 0;">0A</div>
<div class="t" style="left:832.76px;top:1015.00px;font:normal 27.5px/27.5px 'Liberation Mono';color:#f2f2f2;letter-spacing:0.000px;transform:scaleX(0.82);transform-origin:1.79px 0;-webkit-text-stroke:0.1px #f2f2f2;">3</div>
<div class="t" style="left:867.59px;top:1015.00px;font:normal 27.5px/27.5px 'Liberation Mono';color:#f2f2f2;letter-spacing:0.000px;transform:scaleX(0.82);transform-origin:1.92px 0;-webkit-text-stroke:0.1px #f2f2f2;">9</div>
<div class="t" style="left:882.19px;top:1015.00px;font:normal 27.5px/27.5px 'Liberation Mono';color:#f2f2f2;letter-spacing:0.000px;transform:scaleX(0.82);transform-origin:1.92px 0;-webkit-text-stroke:0.1px #f2f2f2;">2</div>
<div class="t" style="left:1030.91px;top:1015.00px;font:normal 27.5px/27.5px 'Liberation Mono';color:#f2f2f2;letter-spacing:0.000px;transform:scaleX(0.82);transform-origin:1.79px 0;-webkit-text-stroke:0.1px #f2f2f2;">3</div>
<div class="t" style="left:1065.69px;top:1015.00px;font:normal 27.5px/27.5px 'Liberation Mono';color:#f2f2f2;letter-spacing:0.000px;transform:scaleX(0.82);transform-origin:1.92px 0;-webkit-text-stroke:0.1px #f2f2f2;">9</div>
<div class="t" style="left:1080.31px;top:1015.00px;font:normal 27.5px/27.5px 'Liberation Mono';color:#f2f2f2;letter-spacing:0.000px;transform:scaleX(0.82);transform-origin:1.79px 0;-webkit-text-stroke:0.1px #f2f2f2;">3</div>
<div class="t" style="left:1426.36px;top:1015.00px;font:normal 27.5px/27.5px 'Liberation Mono';color:#f2f2f2;letter-spacing:0.000px;transform:scaleX(0.82);transform-origin:1.79px 0;-webkit-text-stroke:0.1px #f2f2f2;">3</div>
<div class="t" style="left:1460.94px;top:1015.00px;font:normal 27.5px/27.5px 'Liberation Mono';color:#f2f2f2;letter-spacing:0.000px;transform:scaleX(0.82);transform-origin:1.92px 0;-webkit-text-stroke:0.1px #f2f2f2;">9</div>
<div class="t" style="left:1475.64px;top:1015.00px;font:normal 27.5px/27.5px 'Liberation Mono';color:#f2f2f2;letter-spacing:0.000px;transform:scaleX(0.82);transform-origin:1.38px 0;-webkit-text-stroke:0.1px #f2f2f2;">4</div>
<div class="a" style="left:1578.60px;top:1030.90px;width:4.7px;height:4.7px;background:#f4f4f4"></div>
<div class="a" style="left:1593.03px;top:1030.90px;width:4.7px;height:4.7px;background:#f4f4f4"></div>
<div class="a" style="left:1607.46px;top:1030.90px;width:4.7px;height:4.7px;background:#f4f4f4"></div>
<div class="a" style="left:1621.89px;top:1030.90px;width:4.7px;height:4.7px;background:#f4f4f4"></div>
<div class="a" style="left:1636.32px;top:1030.90px;width:4.7px;height:4.7px;background:#f4f4f4"></div>
<div class="a" style="left:1650.75px;top:1030.90px;width:4.7px;height:4.7px;background:#f4f4f4"></div>
<div class="a" style="left:1665.18px;top:1030.90px;width:4.7px;height:4.7px;background:#f4f4f4"></div>
<div class="a" style="left:1679.61px;top:1030.90px;width:4.7px;height:4.7px;background:#f4f4f4"></div>
<div class="a" style="left:1694.04px;top:1030.90px;width:4.7px;height:4.7px;background:#f4f4f4"></div>
<div class="a" style="left:1708.47px;top:1030.90px;width:4.7px;height:4.7px;background:#f4f4f4"></div>
<div class="a" style="left:1722.90px;top:1030.90px;width:4.7px;height:4.7px;background:#f4f4f4"></div>
<div class="a" style="left:1737.33px;top:1030.90px;width:4.7px;height:4.7px;background:#f4f4f4"></div>
<div class="a" style="left:1751.76px;top:1030.90px;width:4.7px;height:4.7px;background:#f4f4f4"></div>
<div class="a" style="left:1766.19px;top:1030.90px;width:4.7px;height:4.7px;background:#f4f4f4"></div>
<div class="a" style="left:1780.62px;top:1030.90px;width:4.7px;height:4.7px;background:#f4f4f4"></div>
<div class="a" style="left:1795.05px;top:1030.90px;width:4.7px;height:4.7px;background:#f4f4f4"></div>
<div class="t" style="left:667.34px;top:1056.00px;font:normal 26.5px/26.5px 'Liberation Sans';color:#f2f2f2;letter-spacing:-0.300px;transform:scaleX(1.1);transform-origin:1.06px 0;">0B</div>
<div class="t" style="left:1030.91px;top:1057.00px;font:normal 27.5px/27.5px 'Liberation Mono';color:#f2f2f2;letter-spacing:0.000px;transform:scaleX(0.82);transform-origin:1.79px 0;-webkit-text-stroke:0.1px #f2f2f2;">3</div>
<div class="t" style="left:1065.69px;top:1057.00px;font:normal 27.5px/27.5px 'Liberation Mono';color:#f2f2f2;letter-spacing:0.000px;transform:scaleX(0.82);transform-origin:1.92px 0;-webkit-text-stroke:0.1px #f2f2f2;">9</div>
<div class="t" style="left:1080.15px;top:1057.00px;font:normal 27.5px/27.5px 'Liberation Mono';color:#f2f2f2;letter-spacing:0.000px;transform:scaleX(0.82);transform-origin:2.06px 0;-webkit-text-stroke:0.1px #f2f2f2;">6</div>
<div class="a" style="left:1578.60px;top:1072.70px;width:4.7px;height:4.7px;background:#f4f4f4"></div>
<div class="a" style="left:1593.03px;top:1072.70px;width:4.7px;height:4.7px;background:#f4f4f4"></div>
<div class="a" style="left:1607.46px;top:1072.70px;width:4.7px;height:4.7px;background:#f4f4f4"></div>
<div class="a" style="left:1621.89px;top:1072.70px;width:4.7px;height:4.7px;background:#f4f4f4"></div>
<div class="a" style="left:1636.32px;top:1072.70px;width:4.7px;height:4.7px;background:#f4f4f4"></div>
<div class="a" style="left:1650.75px;top:1072.70px;width:4.7px;height:4.7px;background:#f4f4f4"></div>
<div class="a" style="left:1665.18px;top:1072.70px;width:4.7px;height:4.7px;background:#f4f4f4"></div>
<div class="a" style="left:1679.61px;top:1072.70px;width:4.7px;height:4.7px;background:#f4f4f4"></div>
<div class="a" style="left:1694.04px;top:1072.70px;width:4.7px;height:4.7px;background:#f4f4f4"></div>
<div class="a" style="left:1708.47px;top:1072.70px;width:4.7px;height:4.7px;background:#f4f4f4"></div>
<div class="a" style="left:1722.90px;top:1072.70px;width:4.7px;height:4.7px;background:#f4f4f4"></div>
<div class="a" style="left:1737.33px;top:1072.70px;width:4.7px;height:4.7px;background:#f4f4f4"></div>
<div class="a" style="left:1751.76px;top:1072.70px;width:4.7px;height:4.7px;background:#f4f4f4"></div>
<div class="a" style="left:1766.19px;top:1072.70px;width:4.7px;height:4.7px;background:#f4f4f4"></div>
<div class="a" style="left:1780.62px;top:1072.70px;width:4.7px;height:4.7px;background:#f4f4f4"></div>
<div class="a" style="left:1795.05px;top:1072.70px;width:4.7px;height:4.7px;background:#f4f4f4"></div>
<svg class="a" style="left:0;top:0" width="2024" height="1280" viewBox="0 0 2024 1280"><g fill="none" stroke-width="2.2"><rect x="721.50" y="893.40" width="9.1" height="16.4" rx="4.55" ry="5.6" stroke="#f2f2f2"/><path d="M723.05 905.60L729.15 896.00" stroke="#f2f2f2" stroke-width="1.6"/><rect x="736.10" y="893.40" width="9.1" height="16.4" rx="4.55" ry="5.6" stroke="#f2f2f2"/><path d="M737.65 905.60L743.75 896.00" stroke="#f2f2f2" stroke-width="1.6"/><rect x="771.10" y="893.40" width="9.1" height="16.4" rx="4.55" ry="5.6" stroke="#f2f2f2"/><path d="M772.65 905.60L778.75 896.00" stroke="#f2f2f2" stroke-width="1.6"/><rect x="785.70" y="893.40" width="9.1" height="16.4" rx="4.55" ry="5.6" stroke="#f2f2f2"/><path d="M787.25 905.60L793.35 896.00" stroke="#f2f2f2" stroke-width="1.6"/><rect x="820.70" y="893.40" width="9.1" height="16.4" rx="4.55" ry="5.6" stroke="#f2f2f2"/><path d="M822.25 905.60L828.35 896.00" stroke="#f2f2f2" stroke-width="1.6"/><rect x="919.60" y="893.40" width="9.1" height="16.4" rx="4.55" ry="5.6" stroke="#f2f2f2"/><path d="M921.15 905.60L927.25 896.00" stroke="#f2f2f2" stroke-width="1.6"/><rect x="934.20" y="893.40" width="9.1" height="16.4" rx="4.55" ry="5.6" stroke="#f2f2f2"/><path d="M935.75 905.60L941.85 896.00" stroke="#f2f2f2" stroke-width="1.6"/><rect x="969.30" y="893.40" width="9.1" height="16.4" rx="4.55" ry="5.6" stroke="#f2f2f2"/><path d="M970.85 905.60L976.95 896.00" stroke="#f2f2f2" stroke-width="1.6"/><rect x="983.90" y="893.40" width="9.1" height="16.4" rx="4.55" ry="5.6" stroke="#f2f2f2"/><path d="M985.45 905.60L991.55 896.00" stroke="#f2f2f2" stroke-width="1.6"/><rect x="1018.85" y="893.40" width="9.1" height="16.4" rx="4.55" ry="5.6" stroke="#f2f2f2"/><path d="M1020.40 905.60L1026.50 896.00" stroke="#f2f2f2" stroke-width="1.6"/><rect x="1117.35" y="893.40" width="9.1" height="16.4" rx="4.55" ry="5.6" stroke="#f2f2f2"/><path d="M1118.90 905.60L1125.00 896.00" stroke="#f2f2f2" stroke-width="1.6"/><rect x="1131.95" y="893.40" width="9.1" height="16.4" rx="4.55" ry="5.6" stroke="#f2f2f2"/><path d="M1133.50 905.60L1139.60 896.00" stroke="#f2f2f2" stroke-width="1.6"/><rect x="1166.95" y="893.40" width="9.1" height="16.4" rx="4.55" ry="5.6" stroke="#f2f2f2"/><path d="M1168.50 905.60L1174.60 896.00" stroke="#f2f2f2" stroke-width="1.6"/><rect x="1181.55" y="893.40" width="9.1" height="16.4" rx="4.55" ry="5.6" stroke="#f2f2f2"/><path d="M1183.10 905.60L1189.20 896.00" stroke="#f2f2f2" stroke-width="1.6"/><rect x="1216.50" y="893.40" width="9.1" height="16.4" rx="4.55" ry="5.6" stroke="#f2f2f2"/><path d="M1218.05 905.60L1224.15 896.00" stroke="#f2f2f2" stroke-width="1.6"/><rect x="1315.35" y="893.40" width="9.1" height="16.4" rx="4.55" ry="5.6" stroke="#f2f2f2"/><path d="M1316.90 905.60L1323.00 896.00" stroke="#f2f2f2" stroke-width="1.6"/><rect x="1329.95" y="893.40" width="9.1" height="16.4" rx="4.55" ry="5.6" stroke="#f2f2f2"/><path d="M1331.50 905.60L1337.60 896.00" stroke="#f2f2f2" stroke-width="1.6"/><rect x="1364.65" y="893.40" width="9.1" height="16.4" rx="4.55" ry="5.6" stroke="#f2f2f2"/><path d="M1366.20 905.60L1372.30 896.00" stroke="#f2f2f2" stroke-width="1.6"/><rect x="1379.25" y="893.40" width="9.1" height="16.4" rx="4.55" ry="5.6" stroke="#f2f2f2"/><path d="M1380.80 905.60L1386.90 896.00" stroke="#f2f2f2" stroke-width="1.6"/><rect x="1414.30" y="893.40" width="9.1" height="16.4" rx="4.55" ry="5.6" stroke="#f2f2f2"/><path d="M1415.85 905.60L1421.95 896.00" stroke="#f2f2f2" stroke-width="1.6"/><rect x="721.50" y="935.20" width="9.1" height="16.4" rx="4.55" ry="5.6" stroke="#f2f2f2"/><path d="M723.05 947.40L729.15 937.80" stroke="#f2f2f2" stroke-width="1.6"/><rect x="736.10" y="935.20" width="9.1" height="16.4" rx="4.55" ry="5.6" stroke="#f2f2f2"/><path d="M737.65 947.40L743.75 937.80" stroke="#f2f2f2" stroke-width="1.6"/><rect x="771.10" y="935.20" width="9.1" height="16.4" rx="4.55" ry="5.6" stroke="#f2f2f2"/><path d="M772.65 947.40L778.75 937.80" stroke="#f2f2f2" stroke-width="1.6"/><rect x="785.70" y="935.20" width="9.1" height="16.4" rx="4.55" ry="5.6" stroke="#f2f2f2"/><path d="M787.25 947.40L793.35 937.80" stroke="#f2f2f2" stroke-width="1.6"/><rect x="820.70" y="935.20" width="9.1" height="16.4" rx="4.55" ry="5.6" stroke="#f2f2f2"/><path d="M822.25 947.40L828.35 937.80" stroke="#f2f2f2" stroke-width="1.6"/><rect x="835.30" y="935.20" width="9.1" height="16.4" rx="4.55" ry="5.6" stroke="#f2f2f2"/><path d="M836.85 947.40L842.95 937.80" stroke="#f2f2f2" stroke-width="1.6"/><rect x="870.15" y="935.20" width="9.1" height="16.4" rx="4.55" ry="5.6" stroke="#f2f2f2"/><path d="M871.70 947.40L877.80 937.80" stroke="#f2f2f2" stroke-width="1.6"/><rect x="884.75" y="935.20" width="9.1" height="16.4" rx="4.55" ry="5.6" stroke="#f2f2f2"/><path d="M886.30 947.40L892.40 937.80" stroke="#f2f2f2" stroke-width="1.6"/><rect x="919.60" y="935.20" width="9.1" height="16.4" rx="4.55" ry="5.6" stroke="#f2f2f2"/><path d="M921.15 947.40L927.25 937.80" stroke="#f2f2f2" stroke-width="1.6"/><rect x="934.20" y="935.20" width="9.1" height="16.4" rx="4.55" ry="5.6" stroke="#f2f2f2"/><path d="M935.75 947.40L941.85 937.80" stroke="#f2f2f2" stroke-width="1.6"/><rect x="969.30" y="935.20" width="9.1" height="16.4" rx="4.55" ry="5.6" stroke="#f2f2f2"/><path d="M970.85 947.40L976.95 937.80" stroke="#f2f2f2" stroke-width="1.6"/><rect x="983.90" y="935.20" width="9.1" height="16.4" rx="4.55" ry="5.6" stroke="#f2f2f2"/><path d="M985.45 947.40L991.55 937.80" stroke="#f2f2f2" stroke-width="1.6"/><rect x="1018.85" y="935.20" width="9.1" height="16.4" rx="4.55" ry="5.6" stroke="#f2f2f2"/><path d="M1020.40 947.40L1026.50 937.80" stroke="#f2f2f2" stroke-width="1.6"/><rect x="1033.45" y="935.20" width="9.1" height="16.4" rx="4.55" ry="5.6" stroke="#f2f2f2"/><path d="M1035.00 947.40L1041.10 937.80" stroke="#f2f2f2" stroke-width="1.6"/><rect x="1068.25" y="935.20" width="9.1" height="16.4" rx="4.55" ry="5.6" stroke="#f2f2f2"/><path d="M1069.80 947.40L1075.90 937.80" stroke="#f2f2f2" stroke-width="1.6"/><rect x="1082.85" y="935.20" width="9.1" height="16.4" rx="4.55" ry="5.6" stroke="#f2f2f2"/><path d="M1084.40 947.40L1090.50 937.80" stroke="#f2f2f2" stroke-width="1.6"/><rect x="1117.35" y="935.20" width="9.1" height="16.4" rx="4.55" ry="5.6" stroke="#f2f2f2"/><path d="M1118.90 947.40L1125.00 937.80" stroke="#f2f2f2" stroke-width="1.6"/><rect x="1131.95" y="935.20" width="9.1" height="16.4" rx="4.55" ry="5.6" stroke="#f2f2f2"/><path d="M1133.50 947.40L1139.60 937.80" stroke="#f2f2f2" stroke-width="1.6"/><rect x="1166.95" y="935.20" width="9.1" height="16.4" rx="4.55" ry="5.6" stroke="#f2f2f2"/><path d="M1168.50 947.40L1174.60 937.80" stroke="#f2f2f2" stroke-width="1.6"/><rect x="1181.55" y="935.20" width="9.1" height="16.4" rx="4.55" ry="5.6" stroke="#f2f2f2"/><path d="M1183.10 947.40L1189.20 937.80" stroke="#f2f2f2" stroke-width="1.6"/><rect x="1216.50" y="935.20" width="9.1" height="16.4" rx="4.55" ry="5.6" stroke="#f2f2f2"/><path d="M1218.05 947.40L1224.15 937.80" stroke="#f2f2f2" stroke-width="1.6"/><rect x="1315.35" y="935.20" width="9.1" height="16.4" rx="4.55" ry="5.6" stroke="#f2f2f2"/><path d="M1316.90 947.40L1323.00 937.80" stroke="#f2f2f2" stroke-width="1.6"/><rect x="1329.95" y="935.20" width="9.1" height="16.4" rx="4.55" ry="5.6" stroke="#f2f2f2"/><path d="M1331.50 947.40L1337.60 937.80" stroke="#f2f2f2" stroke-width="1.6"/><rect x="1364.65" y="935.20" width="9.1" height="16.4" rx="4.55" ry="5.6" stroke="#f2f2f2"/><path d="M1366.20 947.40L1372.30 937.80" stroke="#f2f2f2" stroke-width="1.6"/><rect x="1379.25" y="935.20" width="9.1" height="16.4" rx="4.55" ry="5.6" stroke="#f2f2f2"/><path d="M1380.80 947.40L1386.90 937.80" stroke="#f2f2f2" stroke-width="1.6"/><rect x="1414.30" y="935.20" width="9.1" height="16.4" rx="4.55" ry="5.6" stroke="#f2f2f2"/><path d="M1415.85 947.40L1421.95 937.80" stroke="#f2f2f2" stroke-width="1.6"/><rect x="721.50" y="977.00" width="9.1" height="16.4" rx="4.55" ry="5.6" stroke="#f4605b"/><path d="M723.05 989.20L729.15 979.60" stroke="#f4605b" stroke-width="1.6"/><rect x="736.10" y="977.00" width="9.1" height="16.4" rx="4.55" ry="5.6" stroke="#f4605b"/><path d="M737.65 989.20L743.75 979.60" stroke="#f4605b" stroke-width="1.6"/><rect x="771.10" y="977.00" width="9.1" height="16.4" rx="4.55" ry="5.6" stroke="#f2f2f2"/><path d="M772.65 989.20L778.75 979.60" stroke="#f2f2f2" stroke-width="1.6"/><rect x="785.70" y="977.00" width="9.1" height="16.4" rx="4.55" ry="5.6" stroke="#f2f2f2"/><path d="M787.25 989.20L793.35 979.60" stroke="#f2f2f2" stroke-width="1.6"/><rect x="820.70" y="977.00" width="9.1" height="16.4" rx="4.55" ry="5.6" stroke="#f4605b"/><path d="M822.25 989.20L828.35 979.60" stroke="#f4605b" stroke-width="1.6"/><rect x="919.60" y="977.00" width="9.1" height="16.4" rx="4.55" ry="5.6" stroke="#f2f2f2"/><path d="M921.15 989.20L927.25 979.60" stroke="#f2f2f2" stroke-width="1.6"/><rect x="934.20" y="977.00" width="9.1" height="16.4" rx="4.55" ry="5.6" stroke="#f2f2f2"/><path d="M935.75 989.20L941.85 979.60" stroke="#f2f2f2" stroke-width="1.6"/><rect x="969.30" y="977.00" width="9.1" height="16.4" rx="4.55" ry="5.6" stroke="#f2f2f2"/><path d="M970.85 989.20L976.95 979.60" stroke="#f2f2f2" stroke-width="1.6"/><rect x="983.90" y="977.00" width="9.1" height="16.4" rx="4.55" ry="5.6" stroke="#f2f2f2"/><path d="M985.45 989.20L991.55 979.60" stroke="#f2f2f2" stroke-width="1.6"/><rect x="1018.85" y="977.00" width="9.1" height="16.4" rx="4.55" ry="5.6" stroke="#f2f2f2"/><path d="M1020.40 989.20L1026.50 979.60" stroke="#f2f2f2" stroke-width="1.6"/><rect x="1082.85" y="977.00" width="9.1" height="16.4" rx="4.55" ry="5.6" stroke="#f2f2f2"/><path d="M1084.40 989.20L1090.50 979.60" stroke="#f2f2f2" stroke-width="1.6"/><rect x="1117.35" y="977.00" width="9.1" height="16.4" rx="4.55" ry="5.6" stroke="#f2f2f2"/><path d="M1118.90 989.20L1125.00 979.60" stroke="#f2f2f2" stroke-width="1.6"/><rect x="1131.95" y="977.00" width="9.1" height="16.4" rx="4.55" ry="5.6" stroke="#f2f2f2"/><path d="M1133.50 989.20L1139.60 979.60" stroke="#f2f2f2" stroke-width="1.6"/><rect x="1166.95" y="977.00" width="9.1" height="16.4" rx="4.55" ry="5.6" stroke="#f2f2f2"/><path d="M1168.50 989.20L1174.60 979.60" stroke="#f2f2f2" stroke-width="1.6"/><rect x="1181.55" y="977.00" width="9.1" height="16.4" rx="4.55" ry="5.6" stroke="#f2f2f2"/><path d="M1183.10 989.20L1189.20 979.60" stroke="#f2f2f2" stroke-width="1.6"/><rect x="1216.50" y="977.00" width="9.1" height="16.4" rx="4.55" ry="5.6" stroke="#f2f2f2"/><path d="M1218.05 989.20L1224.15 979.60" stroke="#f2f2f2" stroke-width="1.6"/><rect x="1231.10" y="977.00" width="9.1" height="16.4" rx="4.55" ry="5.6" stroke="#f2f2f2"/><path d="M1232.65 989.20L1238.75 979.60" stroke="#f2f2f2" stroke-width="1.6"/><rect x="1265.90" y="977.00" width="9.1" height="16.4" rx="4.55" ry="5.6" stroke="#f2f2f2"/><path d="M1267.45 989.20L1273.55 979.60" stroke="#f2f2f2" stroke-width="1.6"/><rect x="1280.50" y="977.00" width="9.1" height="16.4" rx="4.55" ry="5.6" stroke="#f2f2f2"/><path d="M1282.05 989.20L1288.15 979.60" stroke="#f2f2f2" stroke-width="1.6"/><rect x="1315.35" y="977.00" width="9.1" height="16.4" rx="4.55" ry="5.6" stroke="#f2f2f2"/><path d="M1316.90 989.20L1323.00 979.60" stroke="#f2f2f2" stroke-width="1.6"/><rect x="1329.95" y="977.00" width="9.1" height="16.4" rx="4.55" ry="5.6" stroke="#f2f2f2"/><path d="M1331.50 989.20L1337.60 979.60" stroke="#f2f2f2" stroke-width="1.6"/><rect x="1364.65" y="977.00" width="9.1" height="16.4" rx="4.55" ry="5.6" stroke="#f2f2f2"/><path d="M1366.20 989.20L1372.30 979.60" stroke="#f2f2f2" stroke-width="1.6"/><rect x="1379.25" y="977.00" width="9.1" height="16.4" rx="4.55" ry="5.6" stroke="#f2f2f2"/><path d="M1380.80 989.20L1386.90 979.60" stroke="#f2f2f2" stroke-width="1.6"/><rect x="1414.30" y="977.00" width="9.1" height="16.4" rx="4.55" ry="5.6" stroke="#f2f2f2"/><path d="M1415.85 989.20L1421.95 979.60" stroke="#f2f2f2" stroke-width="1.6"/><rect x="721.50" y="1018.80" width="9.1" height="16.4" rx="4.55" ry="5.6" stroke="#f2f2f2"/><path d="M723.05 1031.00L729.15 1021.40" stroke="#f2f2f2" stroke-width="1.6"/><rect x="736.10" y="1018.80" width="9.1" height="16.4" rx="4.55" ry="5.6" stroke="#f2f2f2"/><path d="M737.65 1031.00L743.75 1021.40" stroke="#f2f2f2" stroke-width="1.6"/><rect x="771.10" y="1018.80" width="9.1" height="16.4" rx="4.55" ry="5.6" stroke="#f2f2f2"/><path d="M772.65 1031.00L778.75 1021.40" stroke="#f2f2f2" stroke-width="1.6"/><rect x="785.70" y="1018.80" width="9.1" height="16.4" rx="4.55" ry="5.6" stroke="#f2f2f2"/><path d="M787.25 1031.00L793.35 1021.40" stroke="#f2f2f2" stroke-width="1.6"/><rect x="820.70" y="1018.80" width="9.1" height="16.4" rx="4.55" ry="5.6" stroke="#f2f2f2"/><path d="M822.25 1031.00L828.35 1021.40" stroke="#f2f2f2" stroke-width="1.6"/><rect x="919.60" y="1018.80" width="9.1" height="16.4" rx="4.55" ry="5.6" stroke="#f2f2f2"/><path d="M921.15 1031.00L927.25 1021.40" stroke="#f2f2f2" stroke-width="1.6"/><rect x="934.20" y="1018.80" width="9.1" height="16.4" rx="4.55" ry="5.6" stroke="#f2f2f2"/><path d="M935.75 1031.00L941.85 1021.40" stroke="#f2f2f2" stroke-width="1.6"/><rect x="969.30" y="1018.80" width="9.1" height="16.4" rx="4.55" ry="5.6" stroke="#f2f2f2"/><path d="M970.85 1031.00L976.95 1021.40" stroke="#f2f2f2" stroke-width="1.6"/><rect x="983.90" y="1018.80" width="9.1" height="16.4" rx="4.55" ry="5.6" stroke="#f2f2f2"/><path d="M985.45 1031.00L991.55 1021.40" stroke="#f2f2f2" stroke-width="1.6"/><rect x="1018.85" y="1018.80" width="9.1" height="16.4" rx="4.55" ry="5.6" stroke="#f2f2f2"/><path d="M1020.40 1031.00L1026.50 1021.40" stroke="#f2f2f2" stroke-width="1.6"/><rect x="1117.35" y="1018.80" width="9.1" height="16.4" rx="4.55" ry="5.6" stroke="#f2f2f2"/><path d="M1118.90 1031.00L1125.00 1021.40" stroke="#f2f2f2" stroke-width="1.6"/><rect x="1131.95" y="1018.80" width="9.1" height="16.4" rx="4.55" ry="5.6" stroke="#f2f2f2"/><path d="M1133.50 1031.00L1139.60 1021.40" stroke="#f2f2f2" stroke-width="1.6"/><rect x="1166.95" y="1018.80" width="9.1" height="16.4" rx="4.55" ry="5.6" stroke="#f2f2f2"/><path d="M1168.50 1031.00L1174.60 1021.40" stroke="#f2f2f2" stroke-width="1.6"/><rect x="1181.55" y="1018.80" width="9.1" height="16.4" rx="4.55" ry="5.6" stroke="#f2f2f2"/><path d="M1183.10 1031.00L1189.20 1021.40" stroke="#f2f2f2" stroke-width="1.6"/><rect x="1216.50" y="1018.80" width="9.1" height="16.4" rx="4.55" ry="5.6" stroke="#f2f2f2"/><path d="M1218.05 1031.00L1224.15 1021.40" stroke="#f2f2f2" stroke-width="1.6"/><rect x="1231.10" y="1018.80" width="9.1" height="16.4" rx="4.55" ry="5.6" stroke="#f2f2f2"/><path d="M1232.65 1031.00L1238.75 1021.40" stroke="#f2f2f2" stroke-width="1.6"/><rect x="1265.90" y="1018.80" width="9.1" height="16.4" rx="4.55" ry="5.6" stroke="#f2f2f2"/><path d="M1267.45 1031.00L1273.55 1021.40" stroke="#f2f2f2" stroke-width="1.6"/><rect x="1280.50" y="1018.80" width="9.1" height="16.4" rx="4.55" ry="5.6" stroke="#f2f2f2"/><path d="M1282.05 1031.00L1288.15 1021.40" stroke="#f2f2f2" stroke-width="1.6"/><rect x="1315.35" y="1018.80" width="9.1" height="16.4" rx="4.55" ry="5.6" stroke="#f2f2f2"/><path d="M1316.90 1031.00L1323.00 1021.40" stroke="#f2f2f2" stroke-width="1.6"/><rect x="1329.95" y="1018.80" width="9.1" height="16.4" rx="4.55" ry="5.6" stroke="#f2f2f2"/><path d="M1331.50 1031.00L1337.60 1021.40" stroke="#f2f2f2" stroke-width="1.6"/><rect x="1364.65" y="1018.80" width="9.1" height="16.4" rx="4.55" ry="5.6" stroke="#f2f2f2"/><path d="M1366.20 1031.00L1372.30 1021.40" stroke="#f2f2f2" stroke-width="1.6"/><rect x="1379.25" y="1018.80" width="9.1" height="16.4" rx="4.55" ry="5.6" stroke="#f2f2f2"/><path d="M1380.80 1031.00L1386.90 1021.40" stroke="#f2f2f2" stroke-width="1.6"/><rect x="1414.30" y="1018.80" width="9.1" height="16.4" rx="4.55" ry="5.6" stroke="#f2f2f2"/><path d="M1415.85 1031.00L1421.95 1021.40" stroke="#f2f2f2" stroke-width="1.6"/><rect x="721.50" y="1060.60" width="9.1" height="16.4" rx="4.55" ry="5.6" stroke="#f2f2f2"/><path d="M723.05 1072.80L729.15 1063.20" stroke="#f2f2f2" stroke-width="1.6"/><rect x="736.10" y="1060.60" width="9.1" height="16.4" rx="4.55" ry="5.6" stroke="#f2f2f2"/><path d="M737.65 1072.80L743.75 1063.20" stroke="#f2f2f2" stroke-width="1.6"/><rect x="771.10" y="1060.60" width="9.1" height="16.4" rx="4.55" ry="5.6" stroke="#f2f2f2"/><path d="M772.65 1072.80L778.75 1063.20" stroke="#f2f2f2" stroke-width="1.6"/><rect x="785.70" y="1060.60" width="9.1" height="16.4" rx="4.55" ry="5.6" stroke="#f2f2f2"/><path d="M787.25 1072.80L793.35 1063.20" stroke="#f2f2f2" stroke-width="1.6"/><rect x="820.70" y="1060.60" width="9.1" height="16.4" rx="4.55" ry="5.6" stroke="#f2f2f2"/><path d="M822.25 1072.80L828.35 1063.20" stroke="#f2f2f2" stroke-width="1.6"/><rect x="835.30" y="1060.60" width="9.1" height="16.4" rx="4.55" ry="5.6" stroke="#f2f2f2"/><path d="M836.85 1072.80L842.95 1063.20" stroke="#f2f2f2" stroke-width="1.6"/><rect x="870.15" y="1060.60" width="9.1" height="16.4" rx="4.55" ry="5.6" stroke="#f2f2f2"/><path d="M871.70 1072.80L877.80 1063.20" stroke="#f2f2f2" stroke-width="1.6"/><rect x="884.75" y="1060.60" width="9.1" height="16.4" rx="4.55" ry="5.6" stroke="#f2f2f2"/><path d="M886.30 1072.80L892.40 1063.20" stroke="#f2f2f2" stroke-width="1.6"/><rect x="919.60" y="1060.60" width="9.1" height="16.4" rx="4.55" ry="5.6" stroke="#f2f2f2"/><path d="M921.15 1072.80L927.25 1063.20" stroke="#f2f2f2" stroke-width="1.6"/><rect x="934.20" y="1060.60" width="9.1" height="16.4" rx="4.55" ry="5.6" stroke="#f2f2f2"/><path d="M935.75 1072.80L941.85 1063.20" stroke="#f2f2f2" stroke-width="1.6"/><rect x="969.30" y="1060.60" width="9.1" height="16.4" rx="4.55" ry="5.6" stroke="#f2f2f2"/><path d="M970.85 1072.80L976.95 1063.20" stroke="#f2f2f2" stroke-width="1.6"/><rect x="983.90" y="1060.60" width="9.1" height="16.4" rx="4.55" ry="5.6" stroke="#f2f2f2"/><path d="M985.45 1072.80L991.55 1063.20" stroke="#f2f2f2" stroke-width="1.6"/><rect x="1018.85" y="1060.60" width="9.1" height="16.4" rx="4.55" ry="5.6" stroke="#f2f2f2"/><path d="M1020.40 1072.80L1026.50 1063.20" stroke="#f2f2f2" stroke-width="1.6"/><rect x="1117.35" y="1060.60" width="9.1" height="16.4" rx="4.55" ry="5.6" stroke="#f2f2f2"/><path d="M1118.90 1072.80L1125.00 1063.20" stroke="#f2f2f2" stroke-width="1.6"/><rect x="1131.95" y="1060.60" width="9.1" height="16.4" rx="4.55" ry="5.6" stroke="#f2f2f2"/><path d="M1133.50 1072.80L1139.60 1063.20" stroke="#f2f2f2" stroke-width="1.6"/><rect x="1166.95" y="1060.60" width="9.1" height="16.4" rx="4.55" ry="5.6" stroke="#f2f2f2"/><path d="M1168.50 1072.80L1174.60 1063.20" stroke="#f2f2f2" stroke-width="1.6"/><rect x="1181.55" y="1060.60" width="9.1" height="16.4" rx="4.55" ry="5.6" stroke="#f2f2f2"/><path d="M1183.10 1072.80L1189.20 1063.20" stroke="#f2f2f2" stroke-width="1.6"/><rect x="1216.50" y="1060.60" width="9.1" height="16.4" rx="4.55" ry="5.6" stroke="#f2f2f2"/><path d="M1218.05 1072.80L1224.15 1063.20" stroke="#f2f2f2" stroke-width="1.6"/><rect x="1231.10" y="1060.60" width="9.1" height="16.4" rx="4.55" ry="5.6" stroke="#f2f2f2"/><path d="M1232.65 1072.80L1238.75 1063.20" stroke="#f2f2f2" stroke-width="1.6"/><rect x="1265.90" y="1060.60" width="9.1" height="16.4" rx="4.55" ry="5.6" stroke="#f2f2f2"/><path d="M1267.45 1072.80L1273.55 1063.20" stroke="#f2f2f2" stroke-width="1.6"/><rect x="1280.50" y="1060.60" width="9.1" height="16.4" rx="4.55" ry="5.6" stroke="#f2f2f2"/><path d="M1282.05 1072.80L1288.15 1063.20" stroke="#f2f2f2" stroke-width="1.6"/><rect x="1315.35" y="1060.60" width="9.1" height="16.4" rx="4.55" ry="5.6" stroke="#f2f2f2"/><path d="M1316.90 1072.80L1323.00 1063.20" stroke="#f2f2f2" stroke-width="1.6"/><rect x="1329.95" y="1060.60" width="9.1" height="16.4" rx="4.55" ry="5.6" stroke="#f2f2f2"/><path d="M1331.50 1072.80L1337.60 1063.20" stroke="#f2f2f2" stroke-width="1.6"/><rect x="1364.65" y="1060.60" width="9.1" height="16.4" rx="4.55" ry="5.6" stroke="#f2f2f2"/><path d="M1366.20 1072.80L1372.30 1063.20" stroke="#f2f2f2" stroke-width="1.6"/><rect x="1379.25" y="1060.60" width="9.1" height="16.4" rx="4.55" ry="5.6" stroke="#f2f2f2"/><path d="M1380.80 1072.80L1386.90 1063.20" stroke="#f2f2f2" stroke-width="1.6"/><rect x="1414.30" y="1060.60" width="9.1" height="16.4" rx="4.55" ry="5.6" stroke="#f2f2f2"/><path d="M1415.85 1072.80L1421.95 1063.20" stroke="#f2f2f2" stroke-width="1.6"/><rect x="1428.90" y="1060.60" width="9.1" height="16.4" rx="4.55" ry="5.6" stroke="#f2f2f2"/><path d="M1430.45 1072.80L1436.55 1063.20" stroke="#f2f2f2" stroke-width="1.6"/><rect x="1463.50" y="1060.60" width="9.1" height="16.4" rx="4.55" ry="5.6" stroke="#f2f2f2"/><path d="M1465.05 1072.80L1471.15 1063.20" stroke="#f2f2f2" stroke-width="1.6"/><rect x="1478.10" y="1060.60" width="9.1" height="16.4" rx="4.55" ry="5.6" stroke="#f2f2f2"/><path d="M1479.65 1072.80L1485.75 1063.20" stroke="#f2f2f2" stroke-width="1.6"/></g></svg>
</div></div>
</body></html>
